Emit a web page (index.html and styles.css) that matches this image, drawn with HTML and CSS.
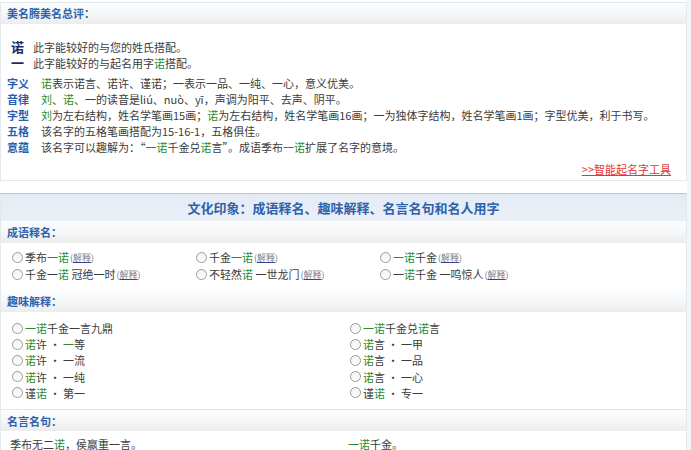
FILE: index.html
```html
<!DOCTYPE html>
<html lang="zh-CN">
<head>
<meta charset="utf-8">
<title>美名腾美名总评</title>
<link rel="stylesheet" href="styles.css">
</head>
<body>
<div class="page">
  <section class="box box-summary">
    <div class="bar">美名腾美名总评：</div>
    <div class="summary">
      <div class="match"><b class="big">诺</b><span>此字能较好的与您的姓氏搭配。</span></div>
      <div class="match"><b class="big">一</b><span>此字能较好的与起名用字<em>诺</em>搭配。</span></div>
      <div class="attrs">
        <div class="attr"><span class="lbl">字义</span><span class="val"><em>诺</em>表示诺言、诺许、谨诺；一表示一品、一纯、一心，意义优美。</span></div>
        <div class="attr"><span class="lbl">音律</span><span class="val"><em>刘</em>、<em>诺</em>、一的读音是liú、nuò、yī，声调为阳平、去声、阴平。</span></div>
        <div class="attr"><span class="lbl">字型</span><span class="val"><em>刘</em>为左右结构，姓名学笔画15画；<em>诺</em>为左右结构，姓名学笔画16画；一为独体字结构，姓名学笔画1画；字型优美，利于书写。</span></div>
        <div class="attr"><span class="lbl">五格</span><span class="val">该名字的五格笔画搭配为15-16-1，五格俱佳。</span></div>
        <div class="attr"><span class="lbl">意蕴</span><span class="val">该名字可以趣解为：“<em>一诺</em>千金兑<em>诺</em>言”。成语季布<em>一诺</em>扩展了名字的意境。</span></div>
      </div>
      <div class="tool"><a href="#">&gt;&gt;智能起名字工具</a></div>
    </div>
  </section>

  <section class="box box-culture">
    <div class="title">文化印象：成语释名、趣味解释、名言名句和名人用字</div>

    <div class="bar">成语释名：</div>
    <div class="list cols3">
      <div class="item"><span class="radio"></span>季布<em>一诺</em><span class="ex">(<a href="#">解释</a>)</span></div>
      <div class="item"><span class="radio"></span>千金<em>一诺</em><span class="ex">(<a href="#">解释</a>)</span></div>
      <div class="item"><span class="radio"></span><em>一诺</em>千金<span class="ex">(<a href="#">解释</a>)</span></div>
      <div class="item"><span class="radio"></span>千金一<em>诺</em> 冠绝一时<span class="ex">(<a href="#">解释</a>)</span></div>
      <div class="item"><span class="radio"></span>不轻然<em>诺</em> 一世龙门<span class="ex">(<a href="#">解释</a>)</span></div>
      <div class="item"><span class="radio"></span>一<em>诺</em>千金 一鸣惊人<span class="ex">(<a href="#">解释</a>)</span></div>
    </div>

    <div class="bar">趣味解释：</div>
    <div class="list cols2 fun">
      <div class="item"><span class="radio"></span><em>一诺</em>千金一言九鼎</div>
      <div class="item"><span class="radio"></span><em>一诺</em>千金兑<em>诺</em>言</div>
      <div class="item"><span class="radio"></span><em>诺</em>许 • <em>一</em>等</div>
      <div class="item"><span class="radio"></span><em>诺</em>言 • 一甲</div>
      <div class="item"><span class="radio"></span><em>诺</em>许 • 一流</div>
      <div class="item"><span class="radio"></span><em>诺</em>言 • 一品</div>
      <div class="item"><span class="radio"></span><em>诺</em>许 • 一纯</div>
      <div class="item"><span class="radio"></span><em>诺</em>言 • 一心</div>
      <div class="item"><span class="radio"></span>谨<em>诺</em> • 第一</div>
      <div class="item"><span class="radio"></span>谨<em>诺</em> • 专一</div>
    </div>

    <div class="bar sep">名言名句：</div>
    <div class="list cols2 quotes">
      <div class="item">季布无二<em>诺</em>，侯嬴重一言。</div>
      <div class="item"><em>一诺</em>千金。</div>
    </div>
  </section>
</div>
</body>
</html>
```

FILE: styles.css
```css
* { box-sizing: border-box; }

html, body {
  margin: 0;
  padding: 0;
  background: #ffffff;
}

body {
  font-family: "Noto Sans CJK SC", "Liberation Sans", sans-serif;
  font-size: 11px;
  color: #3c3c3c;
}

.page {
  width: 691px;
  padding: 2px 4px 0 0;
  background: linear-gradient(to right, #fff 687px, #f3f5f7 687px);
}

em {
  font-style: normal;
  color: #2d8c2d;
}

.box {
  background: #fff;
  border-left: 1px solid #e4e9ee;
  border-right: 1px solid #e4e9ee;
}

.box-summary {
  border-top: 1px solid #dfe7ee;
  border-bottom: 1px solid #e4e9ee;
}

.bar {
  height: 22px;
  line-height: 22px;
  padding-left: 6px;
  font-weight: bold;
  color: #2f62ad;
  background: linear-gradient(to bottom, #fcfdfe 0%, #f6f7f8 50%, #ececec 100%);
}

.box-summary .bar {
  height: 21px;
  line-height: 21px;
}

.summary {
  padding: 15px 0 3px 0;
}

.match {
  display: flex;
  align-items: center;
  height: 16px;
  line-height: 16px;
  padding-left: 10px;
}

.big {
  width: 22px;
  font-size: 13px;
  line-height: 16px;
  color: #1c2d6e;
}

.attrs {
  margin-top: 4px;
}

.attr {
  display: flex;
  height: 16px;
  line-height: 16px;
  padding-left: 6px;
}

.lbl {
  width: 34px;
  flex: none;
  font-weight: bold;
  color: #2a5fae;
}

.tool {
  text-align: right;
  height: 16px;
  line-height: 16px;
  margin-top: 6px;
  padding-right: 15px;
}

.tool a {
  color: #e3353a;
  text-decoration: underline;
}

.box-culture {
  margin-top: 12px;
  border-top: 1px solid #a9c9e2;
}

.title {
  height: 27px;
  line-height: 27px;
  text-align: center;
  font-size: 13px;
  font-weight: bold;
  color: #2f62ad;
  background: linear-gradient(to bottom, #e4ebf4, #ebf0f7);
}

.list {
  display: grid;
  padding-left: 11px;
}

.cols3 {
  grid-template-columns: 184px 184px 184px;
  padding-top: 6px;
  padding-bottom: 7px;
}

.cols3 .item {
  height: 17px;
  line-height: 17px;
}

.cols2 {
  grid-template-columns: 338px 338px;
}

.fun {
  padding-top: 8px;
  padding-bottom: 8px;
}

.fun .item {
  height: 16.2px;
  line-height: 16px;
}

.item {
  display: flex;
  align-items: center;
  white-space: pre;
}

.radio {
  display: inline-block;
  width: 11px;
  height: 11px;
  margin-right: 2px;
  border: 1px solid #9a9a9a;
  border-radius: 50%;
  background: linear-gradient(to bottom, #f2f2f2, #ffffff);
}

.ex {
  font-size: 9px;
  color: #777;
  margin-left: 1px;
}

.ex a {
  color: #7a7f95;
  text-decoration: underline;
  text-decoration-color: #3a3f8a;
}

.bar.sep {
  border-top: 1px solid #e2e6ea;
}

.quotes {
  padding-left: 9px;
  padding-top: 5px;
}

.quotes .item {
  height: 16px;
  line-height: 16px;
}
```
